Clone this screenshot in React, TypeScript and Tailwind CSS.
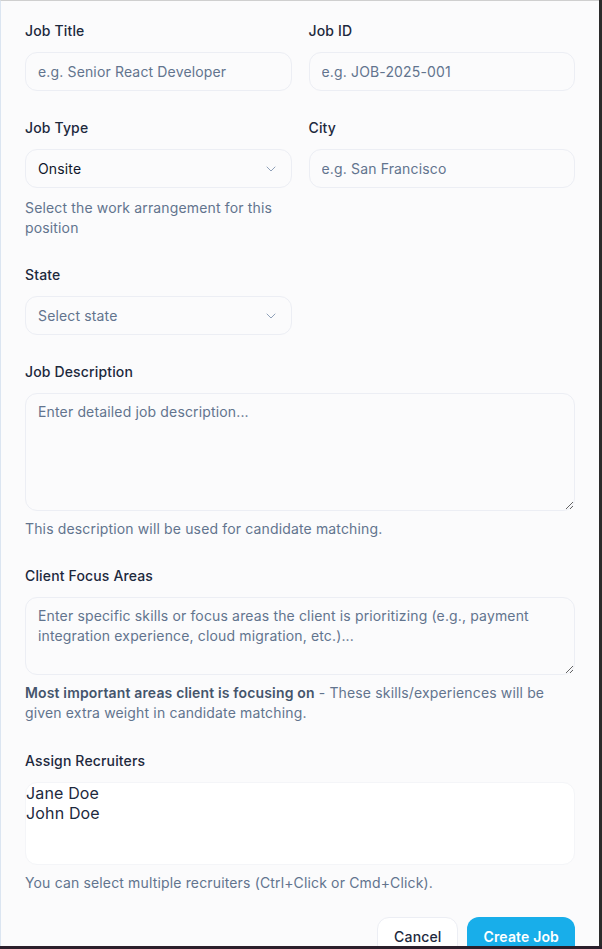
import React from "react";
import { ChevronDown } from "lucide-react";

function Label({ children }: { children: React.ReactNode }) {
  return (
    <label className="block text-sm font-medium leading-5 text-slate-800 mb-[11px]">
      {children}
    </label>
  );
}

function TextInput({ placeholder }: { placeholder: string }) {
  return (
    <input
      type="text"
      placeholder={placeholder}
      className="block w-full h-[39px] rounded-xl border border-[#eceef4] bg-transparent px-3 text-sm tracking-[0.15px] text-slate-900 placeholder:text-slate-500 outline-none"
    />
  );
}

function SelectTrigger({ value, placeholder }: { value?: string; placeholder?: string }) {
  return (
    <button
      type="button"
      className="flex w-full h-[39px] items-center justify-between rounded-xl border border-[#eceef4] bg-transparent px-3 text-sm tracking-[0.15px] outline-none"
    >
      {value ? (
        <span className="text-slate-900">{value}</span>
      ) : (
        <span className="text-slate-500">{placeholder}</span>
      )}
      <ChevronDown size={16} strokeWidth={1.5} className="text-slate-400" />
    </button>
  );
}

function Help({ children, className = "mt-2" }: { children: React.ReactNode; className?: string }) {
  return <p className={`${className} text-sm leading-5 text-slate-500`}>{children}</p>;
}

export default function App() {
  return (
    <div className="w-[602px] h-[949px] flex flex-col bg-[#2b1f2b] font-['Inter',sans-serif] tracking-[0.15px] overflow-hidden">
      <div className="flex flex-1 min-h-0">
        <div className="flex-1 min-w-0 overflow-hidden border-t border-l border-t-[#cfcfcf] border-l-[#dbe5f1] bg-[#fbfbfc] px-6 pt-5">
          <form className="flex flex-col gap-[27px]">
            <div className="grid grid-cols-2 gap-x-[17px]">
              <div>
                <Label>Job Title</Label>
                <TextInput placeholder="e.g. Senior React Developer" />
              </div>
              <div>
                <Label>Job ID</Label>
                <TextInput placeholder="e.g. JOB-2025-001" />
              </div>
            </div>

            <div className="grid grid-cols-2 gap-x-[17px]">
              <div>
                <Label>Job Type</Label>
                <SelectTrigger value="Onsite" />
                <Help className="mt-[10px]">Select the work arrangement for this position</Help>
              </div>
              <div>
                <Label>City</Label>
                <TextInput placeholder="e.g. San Francisco" />
              </div>
            </div>

            <div className="grid grid-cols-2 gap-x-[17px]">
              <div>
                <Label>State</Label>
                <SelectTrigger placeholder="Select state" />
              </div>
            </div>

            <div>
              <Label>Job Description</Label>
              <textarea
                placeholder="Enter detailed job description..."
                className="block w-full h-[118px] rounded-xl border border-[#eceef4] bg-transparent px-3 py-2 text-sm leading-5 tracking-[0.15px] text-slate-900 placeholder:text-slate-500 outline-none"
              />
              <Help>This description will be used for candidate matching.</Help>
            </div>

            <div className="mb-px">
              <Label>Client Focus Areas</Label>
              <textarea
                placeholder="Enter specific skills or focus areas the client is prioritizing (e.g., payment integration experience, cloud migration, etc.)..."
                className="block w-full h-[78px] rounded-xl border border-[#eceef4] bg-transparent px-3 py-2 text-sm leading-5 tracking-[0.15px] text-slate-900 placeholder:text-slate-500 outline-none"
              />
              <Help>
                <span className="font-semibold text-slate-600">Most important areas client is focusing on</span>{" "}
                - These skills/experiences will be given extra weight in candidate matching.
              </Help>
            </div>

            <div>
              <Label>Assign Recruiters</Label>
              <select
                multiple
                className="block w-full h-[83px] rounded-xl border border-[#f4f5f8] bg-white p-0 text-base tracking-[0.15px] text-slate-800 outline-none overflow-hidden"
              >
                <option value="jane">Jane Doe</option>
                <option value="john">John Doe</option>
              </select>
              <Help>You can select multiple recruiters (Ctrl+Click or Cmd+Click).</Help>
            </div>
          </form>

          <div className="mt-6 flex justify-end gap-[9px]">
            <button
              type="button"
              className="h-10 rounded-xl border border-[#eceef4] bg-white px-4 text-sm font-medium tracking-[0.15px] text-slate-800"
            >
              Cancel
            </button>
            <button
              type="button"
              className="h-10 rounded-xl bg-[#18aeea] px-4 text-sm font-semibold tracking-[0.15px] text-white"
            >
              Create Job
            </button>
          </div>
        </div>
        <div className="w-[3px] bg-[#2b2b2b]" />
      </div>
      <div className="h-[3px] bg-[#2b1f2b]" />
    </div>
  );
}
